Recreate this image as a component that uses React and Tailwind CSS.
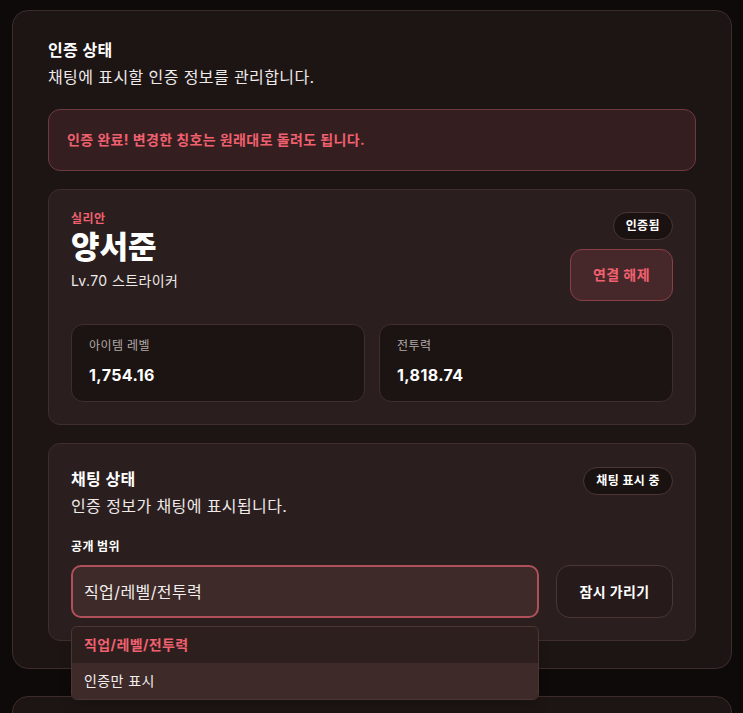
import { useState } from 'react';

const font = { fontFamily: "Inter, 'Noto Sans CJK KR', sans-serif" };

function Pill({ children }) {
  return (
    <span className="inline-flex items-center rounded-full border border-[#4a3633] bg-[#1a1211] px-3 h-[28px] text-xs font-bold text-white">
      {children}
    </span>
  );
}

function Stat({ label, value }) {
  return (
    <div className="flex-1 rounded-xl border border-[#3f2e2c] bg-[#1c1413] px-[17px] pt-[13px] pb-[14px]">
      <p className="text-xs text-[#b3a9a8]">{label}</p>
      <p className="mt-[9px] text-base font-bold text-white">{value}</p>
    </div>
  );
}

export default function App() {
  const [scope, setScope] = useState('직업/레벨/전투력');
  const options = ['직업/레벨/전투력', '인증만 표시'];

  return (
    <div className="min-h-[713px] bg-[#0e0a0a] pl-3 pr-[11px] pt-[10px] tracking-[0.025em] text-white" style={font}>
      <section className="rounded-2xl border border-[#3d2d2a] bg-[#1c1514] px-[35px] pt-[27px] pb-[27px]">
        <h1 className="text-base font-bold leading-6">인증 상태</h1>
        <p className="mt-[3px] text-base leading-6 text-[#efe9e8]">채팅에 표시할 인증 정보를 관리합니다.</p>

        <div className="mt-[20px] flex h-[62px] items-center rounded-xl border border-[#6e3a40] bg-[#341e20] px-[18px]">
          <p className="text-sm font-bold text-[#f0606f]">인증 완료! 변경한 칭호는 원래대로 돌려도 됩니다.</p>
        </div>

        <div className="mt-[18px] rounded-xl border border-[#3f2e2c] bg-[#2a1f1e] px-[22px] pt-[21px] pb-[22px]">
          <div className="flex items-start justify-between">
            <div>
              <p className="text-xs font-bold text-[#f0606f]">실리안</p>
              <p className="mt-[2px] text-[31px] font-black leading-9 tracking-normal">양서준</p>
              <p className="mt-[6px] text-sm text-[#efe9e8]">Lv.70 스트라이커</p>
            </div>
            <div className="flex flex-col items-end gap-[9px] pt-[1px]">
              <Pill>인증됨</Pill>
              <button className="h-[52px] w-[103px] rounded-xl border border-[#8a3f47] bg-[#46282b] text-sm font-bold text-[#f0606f]">
                연결 해제
              </button>
            </div>
          </div>
          <div className="mt-[23px] flex gap-[14px]">
            <Stat label="아이템 레벨" value="1,754.16" />
            <Stat label="전투력" value="1,818.74" />
          </div>
        </div>

        <div className="relative mt-[18px] rounded-xl border border-[#3f2e2c] bg-[#2a1f1e] px-[22px] pt-[23px] pb-[22px]">
          <div className="flex items-start justify-between">
            <div>
              <h2 className="text-base font-bold leading-6">채팅 상태</h2>
              <p className="mt-[3px] text-base leading-6 text-[#efe9e8]">인증 정보가 채팅에 표시됩니다.</p>
            </div>
            <Pill>채팅 표시 중</Pill>
          </div>
          <p className="mt-[21px] text-xs font-bold">공개 범위</p>
          <div className="mt-[10px] flex gap-[17px]">
            <div className="relative flex-1">
              <div className="flex h-[53px] items-center rounded-[10px] border-2 border-[#b0505a] bg-[#3d2a29] px-[11px] text-base text-[#f3eeee]">
                {scope}
              </div>
              <ul className="absolute left-0 right-0 top-[61px] z-10 overflow-hidden rounded-md border border-[#4a3633] bg-[#2d1f1e] shadow-lg">
                {options.map(o => (
                  <li
                    key={o}
                    onClick={() => setScope(o)}
                    className={o === scope
                      ? 'flex h-9 items-center px-3 text-sm font-bold text-[#f0606f]'
                      : 'flex h-9 items-center bg-[#3d2a29] px-3 text-sm text-[#f3eeee]'}
                  >
                    {o}
                  </li>
                ))}
              </ul>
            </div>
            <button className="h-[53px] w-[117px] rounded-[14px] border border-[#4a3633] bg-[#261b1a] text-sm font-bold">
              잠시 가리기
            </button>
          </div>
        </div>
      </section>

      <section className="mt-[27px] h-[60px] rounded-2xl border border-[#3d2d2a] bg-[#1c1514]" />
    </div>
  );
}
